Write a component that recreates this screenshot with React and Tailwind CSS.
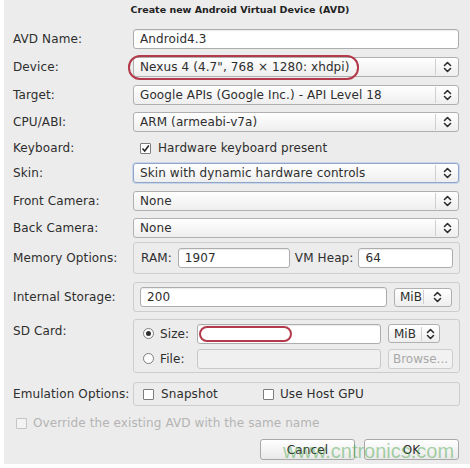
// AVD creation dialog (GTK look)

const FONT = { fontFamily: '"DejaVu Sans", Verdana, sans-serif' };

function Spin() {
  return (
    <svg width="9" height="12" viewBox="0 0 9 12" fill="none" stroke="#2e2e2e" strokeWidth="1.6" strokeLinecap="round" strokeLinejoin="round">
      <path d="M1.5 4.5 L4.5 1.5 L7.5 4.5" />
      <path d="M1.5 7.5 L4.5 10.5 L7.5 7.5" />
    </svg>
  );
}

function Select({ value, focus, children }) {
  return (
    <div
      className={`relative h-[20px] flex items-center rounded-[3px] border bg-gradient-to-b from-white to-[#eeeeee] ${
        focus ? 'border-[#8fa6c8] shadow-[0_0_0_1px_#c9d6ea]' : 'border-[#b0b0b0]'
      }`}
    >
      <span className="flex-1 pl-[6px] truncate">{value}</span>
      <span className="h-[16px] border-l border-[#cfcfcf]" />
      <span className="w-[22px] flex items-center justify-center">
        <Spin />
      </span>
      {children}
    </div>
  );
}

function Input({ value, className = '', disabled, children }) {
  return (
    <div
      className={`relative h-[20px] flex items-center rounded-[3px] border ${
        disabled ? 'bg-[#f0f0f0] border-[#c8c8c8]' : 'bg-white border-[#adadad] shadow-[inset_0_1px_1px_rgba(0,0,0,0.08)]'
      } ${className}`}
    >
      <span className="pl-[6px]">{value}</span>
      {children}
    </div>
  );
}

function Unit({ className = '', wide }) {
  return (
    <div className={`h-[19px] flex items-center rounded-[3px] border border-[#b0b0b0] bg-gradient-to-b from-white to-[#eeeeee] ${className}`}>
      <span className="flex-1 pl-[5px] tracking-normal">MiB</span>
      <span className="h-[14px] border-l border-[#cfcfcf]" />
      <span className={`${wide ? 'w-[27px]' : 'w-[17px]'} flex items-center justify-center`}>
        <Spin />
      </span>
    </div>
  );
}

function Check({ checked, disabled }) {
  return (
    <span
      className={`w-[11px] h-[11px] flex items-center justify-center border rounded-[1px] ${
        disabled ? 'border-[#c4c4c4] bg-[#f3f3f3]' : 'border-[#7c7c7c] bg-white'
      }`}
    >
      {checked && (
        <svg width="9" height="9" viewBox="0 0 9 9" fill="none" stroke="#222" strokeWidth="1.5">
          <path d="M1.5 4.5 L3.7 7 L7.8 1.5" />
        </svg>
      )}
    </span>
  );
}

function Radio({ on }) {
  return (
    <span className="w-[11px] h-[11px] rounded-full border border-[#7c7c7c] bg-white flex items-center justify-center">
      {on && <span className="w-[5px] h-[5px] rounded-full bg-[#2e2e2e]" />}
    </span>
  );
}

function Row({ label, className = '', top, children }) {
  return (
    <div className={`flex ${top ? 'items-start' : 'items-center'} ${className}`}>
      <div className={`w-[120px] shrink-0 ${top ? 'pt-[3px]' : ''}`}>{label}</div>
      <div className="flex-1 min-w-0">{children}</div>
    </div>
  );
}

const RedMark = ({ className }) => (
  <span className={`absolute border-2 border-[#b23a4a] rounded-[12px] pointer-events-none ${className}`} />
);

export default function App() {
  return (
    <div className="w-[470px] h-[468px] bg-white flex overflow-hidden">
      <div
        className="relative ml-[4px] w-[466px] h-[464px] bg-[#ececec] pl-[9px] pr-[11px] text-[12px] tracking-[0.1px] text-[#2e2e2e] flex flex-col"
        style={FONT}
      >
        <div className="h-[20px] flex items-center justify-center pl-[8px] text-[9.5px] tracking-normal font-bold text-[#222]">
          Create new Android Virtual Device (AVD)
        </div>

        <Row label="AVD Name:" className="mt-[9px] h-[20px]">
          <Input value="Android4.3" />
        </Row>
        <Row label="Device:" className="mt-[8px] h-[20px]">
          <Select value={'Nexus 4 (4.7", 768 × 1280: xhdpi)'}>
            <RedMark className="left-[-6px] top-[-3px] w-[231px] h-[25px]" />
          </Select>
        </Row>
        <Row label="Target:" className="mt-[8px] h-[20px]">
          <Select value="Google APIs (Google Inc.) - API Level 18" />
        </Row>
        <Row label="CPU/ABI:" className="mt-[7px] h-[20px]">
          <Select value="ARM (armeabi-v7a)" />
        </Row>
        <Row label="Keyboard:" className="mt-[8px] h-[16px]">
          <div className="flex items-center gap-[7px] pl-[7px]">
            <Check checked />
            <span>Hardware keyboard present</span>
          </div>
        </Row>
        <Row label="Skin:" className="mt-[7px] h-[20px]">
          <Select value="Skin with dynamic hardware controls" focus />
        </Row>
        <Row label="Front Camera:" className="mt-[8px] h-[20px]">
          <Select value="None" />
        </Row>
        <Row label="Back Camera:" className="mt-[7px] h-[20px]">
          <Select value="None" />
        </Row>

        <Row label="Memory Options:" className="mt-[4px]">
          <div className="h-[32px] mr-[-1px] border border-[#cdcdcd] rounded-[3px] flex items-center pl-[7px] pr-[6px]">
            <span>RAM:</span>
            <Input value="1907" className="ml-[6px] w-[112px]" />
            <span className="ml-[5px]">VM Heap:</span>
            <Input value="64" className="ml-[5px] flex-1" />
          </div>
        </Row>

        <Row label="Internal Storage:" className="mt-[8px]">
          <div className="h-[30px] mr-[-1px] border border-[#cdcdcd] rounded-[3px] flex items-center pl-[6px] pr-[7px] gap-[7px]">
            <Input value="200" className="flex-1 h-[19px]" />
            <Unit className="w-[58px]" wide />
          </div>
        </Row>

        <Row label="SD Card:" className="mt-[7px]" top>
          <div className="h-[54px] mr-[-1px] border border-[#cdcdcd] rounded-[3px] flex flex-col justify-center gap-[5px] pl-[9px] pr-[6px]">
            <div className="flex items-center">
              <Radio on />
              <span className="ml-[6px] w-[37px]">Size:</span>
              <Input value="" className="flex-1 h-[19px]">
                <RedMark className="left-[1px] top-[1px] w-[93px] h-[16px] rounded-[8px]" />
              </Input>
              <Unit className="ml-[7px] w-[52px] mr-[13px]" />
            </div>
            <div className="flex items-center">
              <Radio />
              <span className="ml-[6px] w-[37px]">File:</span>
              <Input value="" disabled className="flex-1" />
              <div className="ml-[7px] w-[65px] h-[20px] rounded-[3px] border border-[#cdcdcd] bg-[#f2f2f2] text-[#a9a9a9] tracking-normal flex items-center justify-center">
                Browse...
              </div>
            </div>
          </div>
        </Row>

        <Row label="Emulation Options:" className="mt-[9px]">
          <div className="h-[24px] mr-[-1px] border border-[#cdcdcd] rounded-[3px] flex items-center pl-[9px]">
            <Check />
            <span className="ml-[7px]">Snapshot</span>
            <span className="ml-[45px]"><Check /></span>
            <span className="ml-[6px]">Use Host GPU</span>
          </div>
        </Row>

        <div className="mt-[10px] h-[14px] flex items-center pl-[3px] gap-[6px] text-[#b4b4b4]">
          <Check disabled />
          <span>Override the existing AVD with the same name</span>
        </div>

        <div className="mt-[9px] flex justify-end gap-[9px]">
          <div className="w-[95px] h-[21px] rounded-[3px] border border-[#a8a8a8] bg-gradient-to-b from-white to-[#e9e9e9] flex items-center justify-center">
            Cancel
          </div>
          <div className="w-[95px] h-[21px] rounded-[3px] border border-[#a8a8a8] bg-gradient-to-b from-white to-[#e9e9e9] flex items-center justify-center">
            OK
          </div>
        </div>

        <div
          className="absolute left-[279px] top-[436px] text-[20px] tracking-normal text-[rgba(60,160,60,0.45)] pointer-events-none"
          style={{ fontFamily: '"Liberation Sans", Arial, sans-serif' }}
        >
          www.cntronics.com
        </div>
      </div>
    </div>
  );
}
